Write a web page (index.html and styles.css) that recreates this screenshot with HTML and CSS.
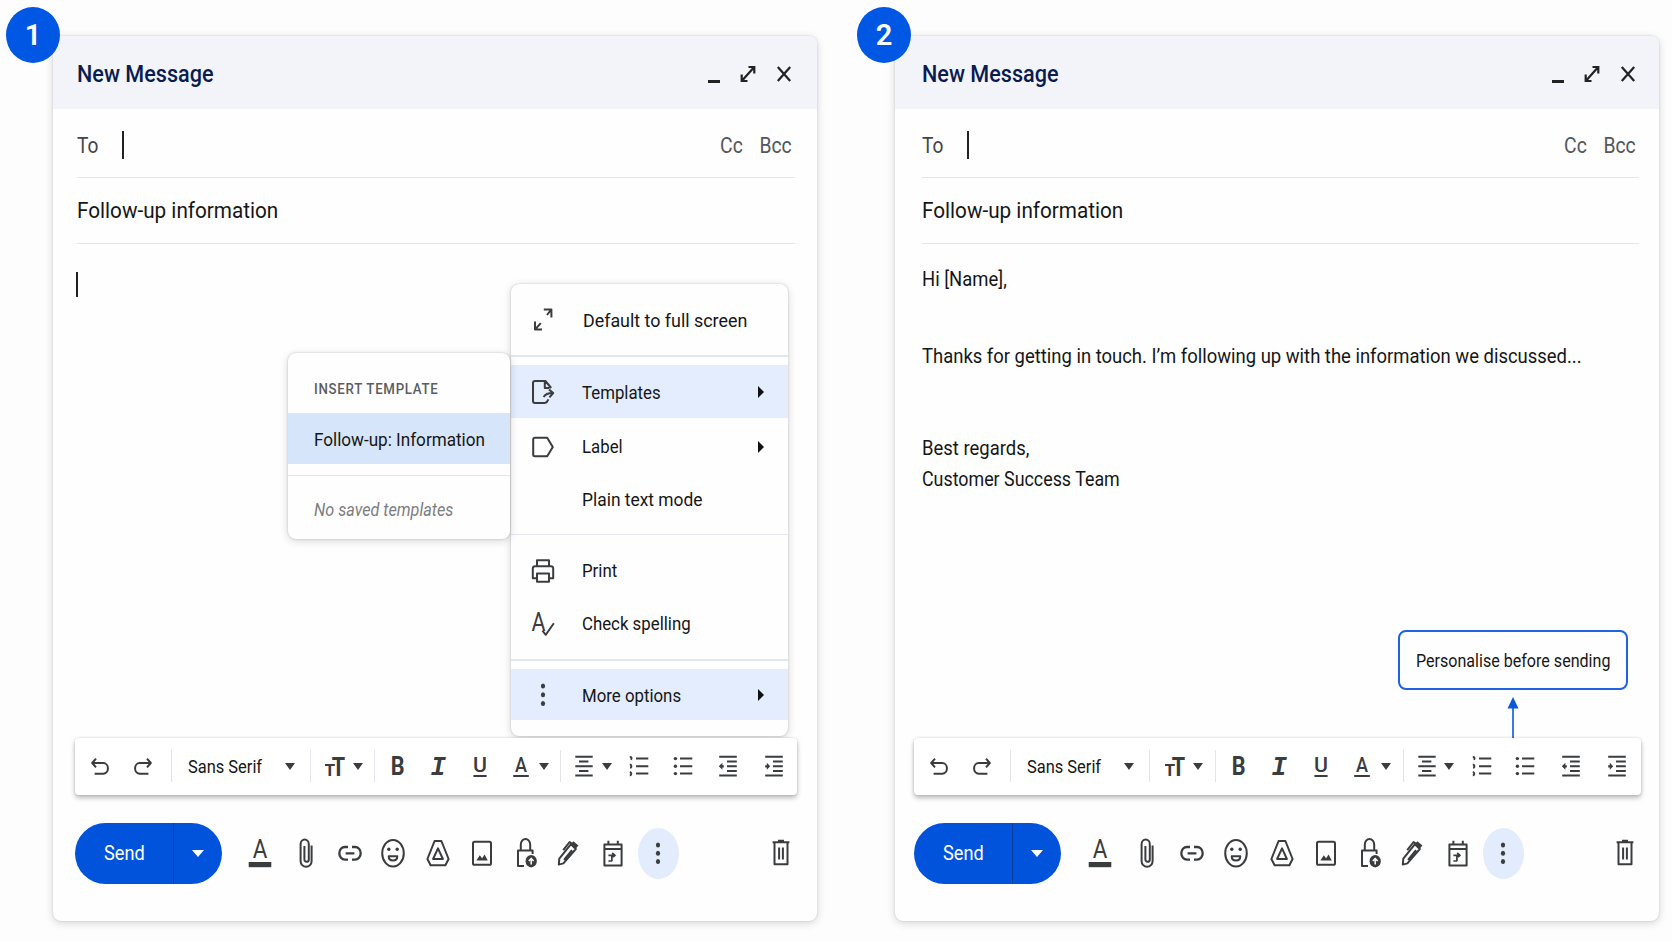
FILE: index.html
```html
<!DOCTYPE html>
<html lang="en">
<head>
  <meta charset="UTF-8" />
  <meta name="viewport" content="width=device-width, initial-scale=1.0" />
  <title>Using email templates</title>
  <link rel="stylesheet" href="styles.css">
</head>
<body>

  <!-- icon set, shared by both windows -->
  <svg class="sprite" aria-hidden="true">
    <symbol id="i-expand" viewBox="0 0 16 18"><path d="M8.5 2h5.8v6.6M14 2.3 2 15.7M1.7 9.4V16h5.8"/></symbol>
    <symbol id="i-close" viewBox="0 0 16 18"><path d="M1.8 2 14.2 16M14.2 2 1.8 16"/></symbol>

    <symbol id="i-undo" viewBox="0 0 20 24"><path d="M6 4.6 2.2 9 6 13.4M2.4 9h10.9a4.6 5.3 0 0 1 0 10.7H4.6"/></symbol>
    <symbol id="i-redo" viewBox="0 0 20 24"><path d="M14 4.6 17.8 9 14 13.4M17.6 9H6.7a4.6 5.3 0 0 0 0 10.7h8.7"/></symbol>
    <symbol id="i-size" viewBox="0 0 20 24">
      <text x="-.4" y="21.6" font-size="17" font-weight="700" textLength="10.6" lengthAdjust="spacingAndGlyphs">T</text>
      <text x="6.8" y="21.6" font-size="26" font-weight="700" textLength="13.4" lengthAdjust="spacingAndGlyphs">T</text>
    </symbol>
    <symbol id="i-bold" viewBox="0 0 20 24"><text x="2.8" y="21.4" font-size="26" font-weight="700" textLength="13.8" lengthAdjust="spacingAndGlyphs">B</text></symbol>
    <symbol id="i-italic" viewBox="0 0 20 24"><text class="mono" x="1.6" y="21.3" font-size="28" font-weight="700" font-style="italic" textLength="15.4" lengthAdjust="spacingAndGlyphs">I</text></symbol>
    <symbol id="i-underline" viewBox="0 0 20 24"><text x="3" y="18" font-size="21" font-weight="500" textLength="14" lengthAdjust="spacingAndGlyphs">U</text><path d="M3.4 22h13.2"/></symbol>
    <symbol id="i-color" viewBox="0 0 20 24"><text x="4" y="18" font-size="21" font-weight="500" textLength="12" lengthAdjust="spacingAndGlyphs">A</text><path d="M2.2 22h15.6"/></symbol>
    <symbol id="i-align" viewBox="0 0 20 24"><path d="M1.3 2.8h17.4M5 7.6h9.4M1.3 12.3h17.4M5 17h9.4M1.3 21.6h17.4"/></symbol>
    <symbol id="i-numbered" viewBox="0 0 20 24"><path d="M7 4.6h12.3M7 12.2h12.3M7 19.6h12.3"/><path d="M.8 3c1.6 0 2.2.7 1.2 2.8M.8 10.4c2 0 2 3 .4 3.6M.8 18c2 .4 2 3 0 3.4"/></symbol>
    <symbol id="i-bullets" viewBox="0 0 20 24"><path d="M7 4.6h12.3M7 12.2h12.3M7 19.6h12.3"/><g class="solid"><circle cx="2.4" cy="4.6" r="1.7"/><circle cx="2.4" cy="12.2" r="1.7"/><circle cx="2.4" cy="19.6" r="1.7"/></g></symbol>
    <symbol id="i-outdent" viewBox="0 0 20 24"><path d="M1.2 2.8h17.6M9 7.5h9.8M9 12.3h9.8M9 17h9.8M1.2 21.6h17.6"/><path class="solid" d="M.8 12.3 4.4 8.8v2.4h1.4v2.2H4.4v2.4z"/></symbol>
    <symbol id="i-indent" viewBox="0 0 20 24"><path d="M1.2 2.8h17.6M9 7.5h9.8M9 12.3h9.8M9 17h9.8M1.2 21.6h17.6"/><path class="solid" d="M1.2 11.2h1.6V8.8l3.4 3.5-3.4 3.5v-2.4H1.2z"/></symbol>

    <symbol id="i-format" viewBox="0 0 28 34"><text x="6.7" y="21.8" font-size="25.5" textLength="14.6" lengthAdjust="spacingAndGlyphs">A</text><path class="solid" d="M2.7 26h22.6v5.2H2.7z"/></symbol>
    <symbol id="i-clip" viewBox="0 0 28 34"><path d="M19.6 9.6v15.6a5.5 5.6 0 0 1-11 0V8.2a4.1 4.6 0 0 1 8.2 0v15.2a2.2 2.4 0 0 1-4.4 0V10"/></symbol>
    <symbol id="i-link" viewBox="0 0 28 34"><path class="thick" d="M12 11H8.9a5.5 6.2 0 0 0 0 12.6H12M16 11h3.1a5.5 6.2 0 0 1 0 12.6H16M9.6 17.3h8.8"/></symbol>
    <symbol id="i-emoji" viewBox="0 0 28 34"><ellipse cx="14" cy="17.2" rx="10.8" ry="13.3"/><g class="solid"><circle cx="9.8" cy="13.2" r="1.7"/><circle cx="18.2" cy="13.2" r="1.7"/></g><path d="M9.7 20.3h8.6c0 2.6-1.9 4.2-4.3 4.2s-4.3-1.6-4.3-4.2z"/></symbol>
    <symbol id="i-drive" viewBox="0 0 28 34"><path d="M10.6 5h6.8l7.2 18-3.2 6.2H6.6L3.4 23z"/><path d="M14 12.4 18.9 23H9.1z"/></symbol>
    <symbol id="i-image" viewBox="0 0 28 34"><rect x="5" y="5.8" width="18" height="23" rx="1.6"/><path class="solid" d="m8.4 24.4 3.4-5.2 2.3 3 2.5-3.8 3.2 6z"/></symbol>
    <symbol id="i-lock" viewBox="0 0 28 34"><path d="M12 30H6V14.4h14.6V18M8.8 14V8.6a4.7 5.6 0 0 1 9.4 0V14"/><ellipse class="solid" cx="19.2" cy="25.2" rx="5.6" ry="6.2"/><path class="cut" d="M19.2 28.4v-5.4M16.8 25l2.4-2.6 2.4 2.6"/></symbol>
    <symbol id="i-pen" viewBox="0 0 28 34"><path d="m4.8 28.6.5-6L17 8.2l4.8 4.8L9.4 27.4zM9.2 14.2 15.6 6l2 1.6M10 23.8l8-9.6"/><path class="solid" d="m17.2 7.4 2.2-2.2 5 4.2-2.6 3.4z"/></symbol>
    <symbol id="i-calendar" viewBox="0 0 28 34"><path d="M5.4 8.4h17.2v21H5.4zM5.4 13h17.2M9.4 4.8V8M18.8 4.8V8"/><path class="thin" d="M9.4 19.400h7M12.900 19.400v5.800M9.400 25h3.600M13.200 17l2.800 2.400-2 1.600"/></symbol>
    <symbol id="i-more" viewBox="0 0 28 34"><g class="solid"><ellipse cx="14" cy="9" rx="2.1" ry="2.5"/><ellipse cx="14" cy="17.2" rx="2.1" ry="2.5"/><ellipse cx="14" cy="25.6" rx="2.1" ry="2.5"/></g></symbol>
    <symbol id="i-trash" viewBox="0 0 28 34"><path d="M5.6 6.2h16.8M11 4.8h6M7.5 6.6v21.6h13V6.6M12.1 11.4v12M15.9 11.4v12"/></symbol>

    <symbol id="i-fullscreen" viewBox="0 0 24 26"><path d="M12.8 2.600h7.6v8M19.8 3.200 16 8M4 14.400v8.2h7M4.4 22.200l5.4-6"/></symbol>
    <symbol id="i-template" viewBox="0 0 24 26"><path d="M14 24H4a2 2 0 0 1-2-2V4a2 2 0 0 1 2-2h10.4l5.8 7M13.8 2.6V9h4.6M12.6 18c1.6-2.6 4-4 8.8-4M18 10.4l4.2 3.6-3.8 4.4M17.4 20.4c-.8 2-1.8 3.2-3.4 3.6"/></symbol>
    <symbol id="i-label" viewBox="0 0 24 26"><path d="M3.8 3.8h12.4L21.8 13l-5.6 9.2H3.8a1.6 1.6 0 0 1-1.6-1.6V5.4a1.6 1.6 0 0 1 1.6-1.6z"/></symbol>
    <symbol id="i-print" viewBox="0 0 24 26"><path d="M6 8V2.2h12V8M6 20.2H1.8v-9.600a2.400 2.400 0 0 1 2.400-2.400h15.600a2.400 2.400 0 0 1 2.400 2.400v9.600H18M6 15.600h12v8.200H6z"/></symbol>
    <symbol id="i-spell" viewBox="0 0 24 26"><text x=".4" y="20" font-size="25" textLength="14" lengthAdjust="spacingAndGlyphs">A</text><path d="m11.4 19.6 3.4 4.2 8-11.6"/></symbol>
    <symbol id="i-dots" viewBox="0 0 24 26"><g class="solid"><ellipse cx="12" cy="4" rx="2.100" ry="2.500"/><ellipse cx="12" cy="12.800" rx="2.100" ry="2.500"/><ellipse cx="12" cy="21.500" rx="2.100" ry="2.500"/></g></symbol>
  </svg>

  <main class="steps">

    <section class="compose compose-first">
      <span class="badge">1</span>
      <header class="compose-head">
        <h2 class="title">New Message</h2>
        <div class="window-controls">
          <i class="minimize"></i>
          <svg><use href="#i-expand"/></svg>
          <svg><use href="#i-close"/></svg>
        </div>
      </header>
      <div class="field recipients">
        <label>To</label><i class="cursor"></i>
        <div class="copies"><span class="cc">Cc</span><span class="bcc">Bcc</span></div>
      </div>
      <div class="field"><span class="subject">Follow-up information</span></div>

      <div class="message"><i class="cursor cursor-body"></i></div>

      <div class="toolbar">
        <div class="group history"><svg><use href="#i-undo"/></svg><svg><use href="#i-redo"/></svg></div>
        <div class="group font"><span class="font-name">Sans Serif</span><i class="caret"></i></div>
        <div class="group size"><svg><use href="#i-size"/></svg><i class="caret"></i></div>
        <div class="group style"><svg><use href="#i-bold"/></svg><svg><use href="#i-italic"/></svg><svg><use href="#i-underline"/></svg><svg><use href="#i-color"/></svg><i class="caret"></i></div>
        <div class="group paragraph"><svg><use href="#i-align"/></svg><i class="caret"></i><svg><use href="#i-numbered"/></svg><svg><use href="#i-bullets"/></svg><svg><use href="#i-outdent"/></svg><svg><use href="#i-indent"/></svg></div>
      </div>

      <footer class="actions">
        <div class="send"><button class="send-main"><span>Send</span></button><button class="send-more"><i class="caret"></i></button></div>
        <div class="tools">
          <svg><use href="#i-format"/></svg>
          <svg><use href="#i-clip"/></svg>
          <svg><use href="#i-link"/></svg>
          <svg><use href="#i-emoji"/></svg>
          <svg><use href="#i-drive"/></svg>
          <svg><use href="#i-image"/></svg>
          <svg><use href="#i-lock"/></svg>
          <svg><use href="#i-pen"/></svg>
          <svg><use href="#i-calendar"/></svg>
          <span class="more"><svg><use href="#i-more"/></svg></span>
        </div>
        <svg class="trash"><use href="#i-trash"/></svg>
      </footer>

      <ul class="menu">
        <li class="item item-first"><svg><use href="#i-fullscreen"/></svg><span>Default to full screen</span></li>
        <li class="rule"></li>
        <li class="item active"><svg><use href="#i-template"/></svg><span>Templates</span><i class="arrow"></i></li>
        <li class="item item-label"><svg><use href="#i-label"/></svg><span>Label</span><i class="arrow"></i></li>
        <li class="item item-plain"><span>Plain text mode</span></li>
        <li class="rule rule-spaced"></li>
        <li class="item"><svg><use href="#i-print"/></svg><span>Print</span></li>
        <li class="item"><svg><use href="#i-spell"/></svg><span>Check spelling</span></li>
        <li class="rule rule-spaced"></li>
        <li class="item item-more active"><svg><use href="#i-dots"/></svg><span>More options</span><i class="arrow"></i></li>
      </ul>

      <div class="submenu">
        <div class="submenu-title"><span>INSERT TEMPLATE</span></div>
        <div class="submenu-item"><span>Follow-up: Information</span></div>
        <div class="submenu-empty"><span>No saved templates</span></div>
      </div>
    </section>

    <section class="compose compose-second">
      <span class="badge">2</span>
      <header class="compose-head">
        <h2 class="title">New Message</h2>
        <div class="window-controls">
          <i class="minimize"></i>
          <svg><use href="#i-expand"/></svg>
          <svg><use href="#i-close"/></svg>
        </div>
      </header>
      <div class="field recipients">
        <label>To</label><i class="cursor"></i>
        <div class="copies"><span class="cc">Cc</span><span class="bcc">Bcc</span></div>
      </div>
      <div class="field"><span class="subject">Follow-up information</span></div>

      <div class="message">
        <p class="greeting"><span>Hi [Name],</span></p>
        <p class="text"><span>Thanks for getting in touch. I’m following up with the information we discussed...</span></p>
        <p class="signature"><span>Best regards,</span><br><span class="team">Customer Success Team</span></p>
        <div class="note">
          <div class="note-box"><span>Personalise before sending</span></div>
          <svg class="note-arrow" viewBox="0 0 12 41"><path d="M6 0 11.5 11.5H.5z"/><path d="M5.2 10h1.600v31H5.200z"/></svg>
        </div>
      </div>

      <div class="toolbar">
        <div class="group history"><svg><use href="#i-undo"/></svg><svg><use href="#i-redo"/></svg></div>
        <div class="group font"><span class="font-name">Sans Serif</span><i class="caret"></i></div>
        <div class="group size"><svg><use href="#i-size"/></svg><i class="caret"></i></div>
        <div class="group style"><svg><use href="#i-bold"/></svg><svg><use href="#i-italic"/></svg><svg><use href="#i-underline"/></svg><svg><use href="#i-color"/></svg><i class="caret"></i></div>
        <div class="group paragraph"><svg><use href="#i-align"/></svg><i class="caret"></i><svg><use href="#i-numbered"/></svg><svg><use href="#i-bullets"/></svg><svg><use href="#i-outdent"/></svg><svg><use href="#i-indent"/></svg></div>
      </div>

      <footer class="actions">
        <div class="send"><button class="send-main"><span>Send</span></button><button class="send-more"><i class="caret"></i></button></div>
        <div class="tools">
          <svg><use href="#i-format"/></svg>
          <svg><use href="#i-clip"/></svg>
          <svg><use href="#i-link"/></svg>
          <svg><use href="#i-emoji"/></svg>
          <svg><use href="#i-drive"/></svg>
          <svg><use href="#i-image"/></svg>
          <svg><use href="#i-lock"/></svg>
          <svg><use href="#i-pen"/></svg>
          <svg><use href="#i-calendar"/></svg>
          <span class="more"><svg><use href="#i-more"/></svg></span>
        </div>
        <svg class="trash"><use href="#i-trash"/></svg>
      </footer>
    </section>

  </main>
</body>
</html>
```
FILE: styles.css
```css
* {
  box-sizing: border-box;
}
body {
  margin: 0;
  width: 1672px;
  height: 941px;
  overflow: hidden;
  background: #fdfdfd;
  font-family: Roboto, sans-serif;
  color: #151617;
}
svg {
  display: block;
  fill: none;
  stroke: #3b3c3e;
  stroke-width: 2;
  stroke-linejoin: round;
}
.sprite {
  display: none;
}
svg text {
  fill: #3b3c3e;
  stroke: none;
}
.mono {
  font-family: "Liberation Mono", monospace;
}
.solid {
  fill: #3b3c3e;
  stroke: none;
}
.thick {
  stroke-width: 2.3;
}
.thin {
  stroke-width: 1.7;
}
.cut {
  stroke: #fff;
  stroke-width: 1.5;
}
/* the type is slightly condensed throughout */
.title, .recipients label, .copies span, .subject, .font-name,
.send-main span, .menu span, .submenu span, .message p span, .note-box span {
  display: inline-block;
  white-space: nowrap;
  transform: scaleX(var(--narrow, .92));
  transform-origin: left center;
}
.steps {
  display: flex;
  gap: 78px;
  padding: 36px 0 0 53px;
}

/* compose window */
.compose {
  position: relative;
  display: flex;
  flex-direction: column;
  width: 764px;
  height: 885px;
  border-radius: 8px;
  background: #fefefe;
  box-shadow: 0 0 2px rgba(0,0,0,.16), 0 2px 9px rgba(0,0,0,.16);
}
.compose-first {
  --left: 24px;
  --right: 22px;
}
.compose-second {
  --left: 27px;
  --right: 20px;
}
.badge {
  position: absolute;
  left: -47px;
  top: -29px;
  width: 54px;
  height: 56px;
  border-radius: 50%;
  background: #0057e4;
  color: #fff;
  font-size: 29px;
  font-weight: 600;
  line-height: 57px;
  text-align: center;
}
.compose-second .badge {
  left: -38px;
}
.compose-head {
  display: flex;
  align-items: center;
  justify-content: space-between;
  height: 73px;
  padding: 3px calc(var(--right) + 3px) 0 var(--left);
  border-radius: 8px 8px 0 0;
  background: #f2f4fa;
}
.title {
  margin: 0;
  font-size: 23.5px;
  font-weight: 500;
  color: #0a1c4e;
}
.window-controls {
  display: flex;
  align-items: center;
}
.window-controls svg {
  width: 16px;
  height: 18px;
  margin-left: 20px;
  stroke: #222;
  stroke-width: 2.2;
  stroke-linejoin: miter;
}
.minimize {
  width: 12px;
  height: 3px;
  margin-top: 14px;
  background: #222;
}
.field {
  display: flex;
  align-items: center;
  height: 65.5px;
  margin: 0 var(--right) 0 var(--left);
  border-bottom: 1.5px solid #e4e6ee;
  font-size: 22.5px;
}
.recipients {
  height: 69px;
  padding-top: 4px;
  color: #444648;
}
.recipients label {
  --narrow: .87;
  width: 45px;
  font-size: 22px;
}
.cursor {
  width: 2px;
  height: 28px;
  background: #222;
}
.copies {
  --narrow: .88;
  display: flex;
  gap: 11.5px;
  margin-left: auto;
  padding-right: 3.5px;
  font-size: 22px;
  color: #55575a;
}
.copies span {
  transform-origin: right center;
}
.message {
  --narrow: .946;
  flex: 1;
  display: flex;
  flex-direction: column;
  padding: 0 31px 0 var(--left);
  font-size: 19.5px;
}
.cursor-body {
  height: 25px;
  margin-top: 28.5px;
  margin-left: -1px;
}
.message p {
  margin: 0;
  line-height: 31px;
}
.greeting {
  padding-top: 20.5px;
}
.text {
  padding-top: 46px;
}
.signature {
  padding-top: 61px;
}
.team {
  --narrow: .915;
}
.note {
  --narrow: .893;
  display: flex;
  flex-direction: column;
  align-items: center;
  align-self: flex-end;
  width: 230px;
  margin-top: auto;
}
.note-box {
  width: 230px;
  height: 60px;
  border: 2px solid #1f62e2;
  border-radius: 8px;
  padding-left: 16px;
  font-size: 18px;
  line-height: 57px;
}
.note-arrow {
  width: 12px;
  height: 41px;
  margin-top: 7px;
  fill: #0b57dc;
  stroke: none;
}

/* formatting toolbar */
.toolbar {
  position: relative;
  z-index: 2;
  display: flex;
  height: 56.5px;
  margin-right: 20px;
  margin-left: 22px;
  border-radius: 4px;
  background: #fff;
  box-shadow: 0 3px 5px rgba(0,0,0,.26), 0 0 3px rgba(0,0,0,.14);
}
.compose-second .toolbar {
  margin: 0 18px 0 19px;
}
.toolbar svg {
  width: 20px;
  height: 24px;
}
.group {
  position: relative;
  display: flex;
  align-items: center;
}
.group + .group::before {
  content: "";
  position: absolute;
  left: 0;
  top: 12px;
  width: 1px;
  height: 32px;
  background: #e3e5ea;
}
.history {
  width: 96px;
  padding-left: 14.5px;
  gap: 23px;
}
.caret {
  width: 0;
  height: 0;
  border: 5.2px solid transparent;
  border-top: 7px solid #3b3c3e;
  border-bottom: 0;
}
.font {
  width: 138.5px;
  justify-content: space-between;
  padding: 0 15px 0 17px;
}
.font-name {
  --narrow: .865;
  width: 80px;
  font-size: 19px;
}
.size {
  width: 64px;
  padding-left: 15px;
  gap: 8px;
}
.style {
  width: 186.5px;
  padding-left: 14px;
  gap: 21px;
}
.style .caret {
  margin-left: -12.5px;
}
.paragraph {
  display: grid;
  grid-template-columns: 27.5px 27.5px 43.5px 45.5px 46px 20px;
  padding-left: 14px;
}
.compose-second .size {
  width: 66px;
  padding-left: 16px;
}
.compose-second .style {
  width: 188px;
  gap: 21.3px;
}

/* bottom row */
.actions {
  display: flex;
  align-items: center;
  height: 126.5px;
  padding: 0 22px 9px 22px;
}
.compose-second .actions {
  padding: 0 20px 9px 19px;
}
.send {
  display: flex;
  width: 147px;
  height: 61px;
  border-radius: 31px;
  overflow: hidden;
  background: #0053da;
}
.send button {
  display: flex;
  align-items: center;
  border: none;
  padding: 0;
  background: none;
  font-family: inherit;
  color: #fff;
}
.send .send-main {
  width: 99px;
  border-right: 1px solid #0a3f9e;
}
.send-main span {
  --narrow: .885;
  margin-left: 29px;
  font-size: 20.5px;
}
.send .send-more {
  padding-left: 18px;
}
.send-more .caret {
  border-width: 7.5px 6px 0;
  border-top-color: #fff;
}
.tools {
  display: grid;
  align-items: center;
  grid-template-columns: 45.5px 44px 43.5px 45px 43.5px 44px 42px 45px 39px 41px;
  margin-left: 24px;
}
.compose-second .tools {
  grid-template-columns: 47px 45px 44px 45.5px 44px 44.5px 42px 45.5px 39px 41px;
  margin-left: 25px;
}
.tools svg, .trash {
  width: 28px;
  height: 34px;
}
.more {
  display: flex;
  align-items: center;
  justify-content: center;
  width: 41px;
  height: 51px;
  border-radius: 50%;
  background: #e3ecfd;
}
.trash {
  margin-left: auto;
}

/* more options menu */
.menu {
  --narrow: .885;
  position: absolute;
  left: 457.5px;
  top: 248px;
  width: 277.5px;
  height: 452px;
  margin: 0;
  padding: 0;
  list-style: none;
  border-radius: 8px;
  background: #fefefe;
  box-shadow: 0 0 2px rgba(0,0,0,.22), 0 2px 8px rgba(0,0,0,.16);
  font-size: 19px;
}
.item {
  display: flex;
  align-items: center;
  height: 53px;
  padding: 1px 24px 0 20.5px;
}
.item svg {
  width: 24px;
  height: 26px;
  margin-right: 26.5px;
}
.item-first {
  --narrow: .94;
  height: 71px;
}
.item-first svg {
  margin-right: 27.5px;
}
.item-label {
  height: 56px;
}
.item-plain {
  --narrow: .915;
  height: 50px;
  padding-left: 71px;
}
.item-more {
  height: 51px;
}
.active {
  background: #e4edfd;
}
.rule {
  height: 1.5px;
  margin-bottom: 8.5px;
  background: #e3e6ee;
}
.rule-spaced {
  margin-top: 9.5px;
}
.arrow {
  margin-left: auto;
  border: 6px solid transparent;
  border-left: 6.5px solid #111;
  border-right: 0;
}

/* template submenu */
.submenu {
  --narrow: .9;
  position: absolute;
  left: 235px;
  top: 317px;
  width: 221.5px;
  height: 185.5px;
  border-radius: 8px;
  background: #fefefe;
  box-shadow: 0 0 2px rgba(0,0,0,.22), 0 2px 8px rgba(0,0,0,.16);
}
.submenu div {
  padding-left: 25.5px;
}
.submenu-title {
  --narrow: .885;
  height: 60px;
  padding-top: 11px;
  font-size: 15px;
  font-weight: 500;
  line-height: 50px;
  letter-spacing: .8px;
  color: #5b5d60;
}
.submenu-item {
  height: 50.5px;
  background: #d7e5fb;
  font-size: 19px;
  line-height: 53px;
}
.submenu-empty {
  height: 64px;
  margin-top: 11px;
  border-top: 1.5px solid #e3e6ee;
  font-size: 18px;
  font-style: italic;
  line-height: 68px;
  color: #7b7d80;
}
```
